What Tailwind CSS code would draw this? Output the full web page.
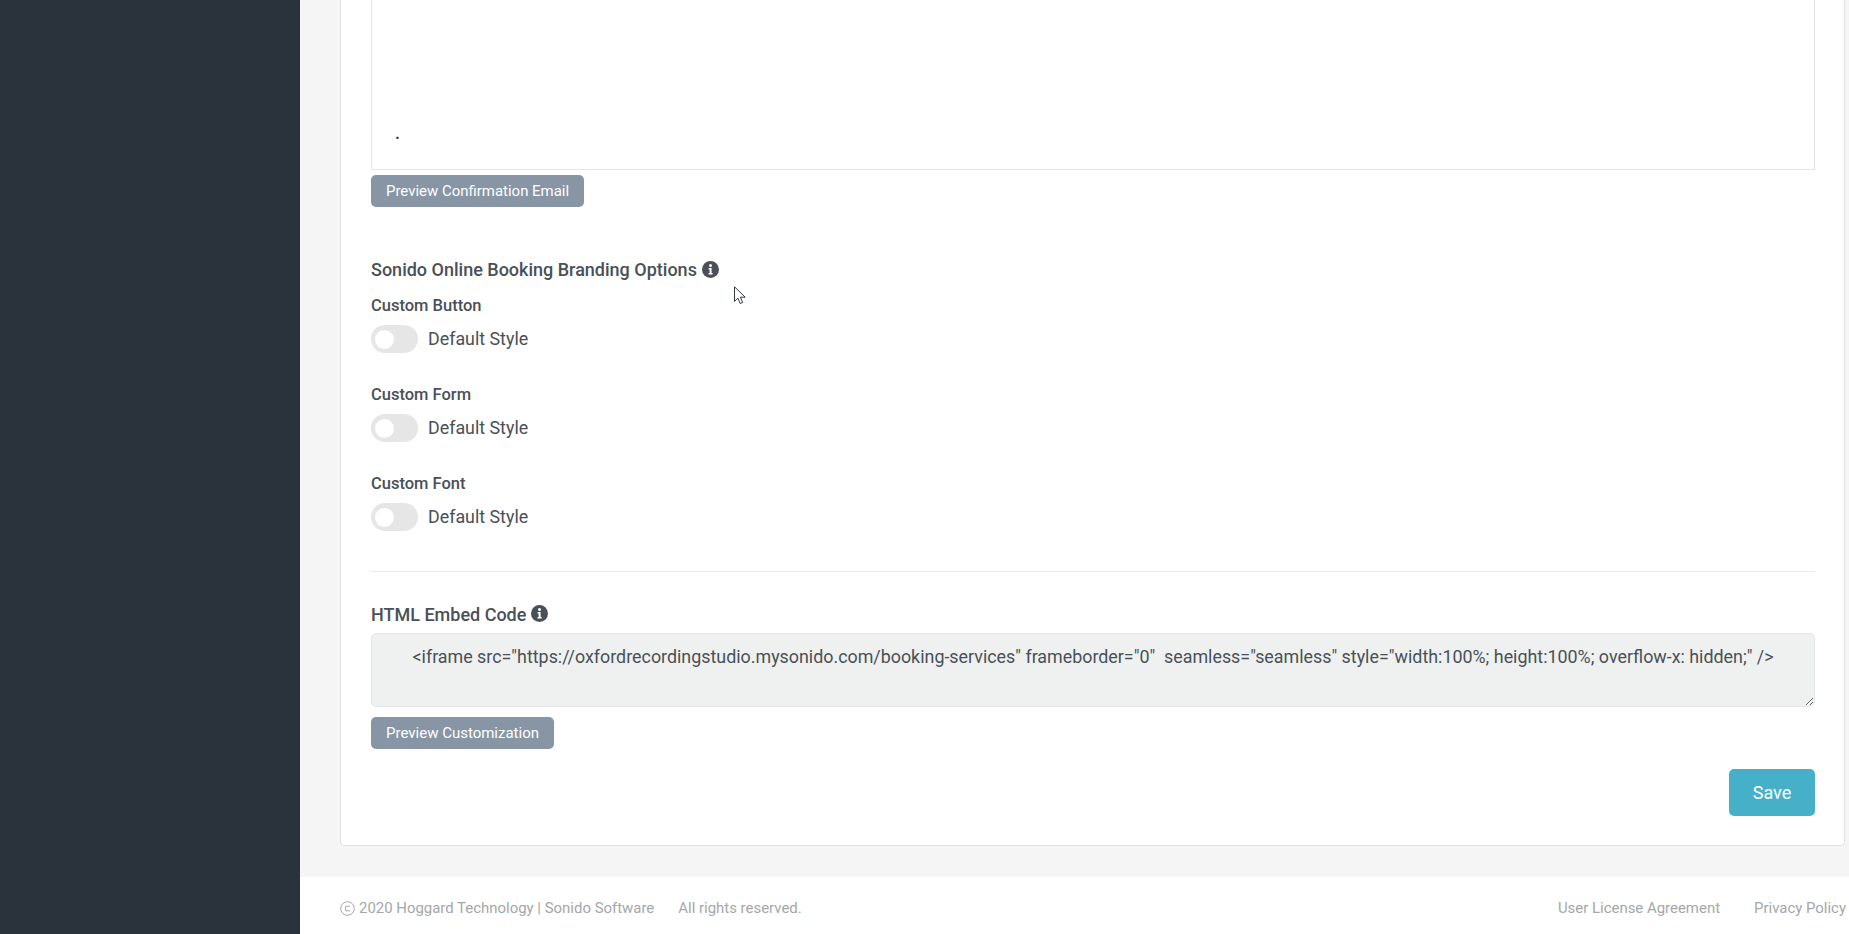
<!DOCTYPE html>
<html lang="en">
<head>
    <meta charset="UTF-8">
    <title>Sonido Online Booking</title>
    <script src="https://cdn.jsdelivr.net/npm/@tailwindcss/browser@4"></script>
</head>
<body class="h-[934px] overflow-hidden flex font-['Roboto',sans-serif] text-[#495057] bg-white">
    <aside class="w-[300px] shrink-0 bg-[#2a323c]"></aside>

    <main class="flex-1 flex flex-col min-w-0">
        <div class="flex-1 bg-[#f5f5f5] pl-10 pr-1">
            <section class="relative h-[846px] bg-white border-x border-b border-[#dfe1e3] rounded-b-[5px] pl-[30px] pr-[29px]">
                <div class="h-[170px] border-x border-b border-[#e4e6e8] flex items-end pl-[23px] pb-[28px]">
                    <span class="text-lg font-medium leading-4 text-[#343a40]">.</span>
                </div>
                <button class="mt-[5px] block h-8 px-[15px] rounded-[5px] bg-[#8795a5] text-white text-[14.96px]">Preview Confirmation Email</button>

                <h3 class="mt-[51px] h-6 flex items-center gap-[5px] text-lg font-medium">
                    Sonido Online Booking Branding Options
                    <svg class="w-[17px] h-[17px] -translate-y-px" viewBox="0 0 17 17"><circle cx="8.5" cy="8.5" r="8.5" fill="#495057"/><circle cx="8.5" cy="4.6" r="1.5" fill="#fff"/><path d="M6.6 7h3v5h1v1.5H6.6V12h1V8.5h-1z" fill="#fff"/></svg>
                </h3>

                <div class="mt-[13px] flex flex-col gap-[31px]">
                    <div>
                        <label class="block h-5 leading-5 pt-px text-[16.5px] font-medium">Custom Button</label>
                        <div class="mt-[10px] flex items-center gap-[10px] h-7">
                            <span class="w-[47px] h-7 rounded-full bg-[#e6e6e6] flex items-center pl-1"><span class="w-[19px] h-[19px] rounded-full bg-white"></span></span>
                            <span class="pt-px text-[17.85px]">Default Style</span>
                        </div>
                    </div>
                    <div>
                        <label class="block h-5 leading-5 pt-px text-[16.5px] font-medium">Custom Form</label>
                        <div class="mt-[10px] flex items-center gap-[10px] h-7">
                            <span class="w-[47px] h-7 rounded-full bg-[#e6e6e6] flex items-center pl-1"><span class="w-[19px] h-[19px] rounded-full bg-white"></span></span>
                            <span class="pt-px text-[17.85px]">Default Style</span>
                        </div>
                    </div>
                    <div>
                        <label class="block h-5 leading-5 pt-px text-[16.5px] font-medium">Custom Font</label>
                        <div class="mt-[10px] flex items-center gap-[10px] h-7">
                            <span class="w-[47px] h-7 rounded-full bg-[#e6e6e6] flex items-center pl-1"><span class="w-[19px] h-[19px] rounded-full bg-white"></span></span>
                            <span class="pt-px text-[17.85px]">Default Style</span>
                        </div>
                    </div>
                </div>

                <hr class="mt-10 border-[#e9ebec]">

                <h3 class="mt-[30px] h-6 flex items-center gap-[5px] pt-px text-lg font-medium">
                    HTML Embed Code
                    <svg class="w-[17px] h-[17px] -translate-y-px" viewBox="0 0 17 17"><circle cx="8.5" cy="8.5" r="8.5" fill="#495057"/><circle cx="8.5" cy="4.6" r="1.5" fill="#fff"/><path d="M6.6 7h3v5h1v1.5H6.6V12h1V8.5h-1z" fill="#fff"/></svg>
                </h3>
                <textarea readonly class="mt-[7px] block w-full h-[74px] rounded-[5px] border border-[#e4e6e8] bg-[#eff1f1] pl-[40.5px] pr-3 pt-[11px] text-[17.87px] leading-6 resize-y outline-none"><iframe src="https://oxfordrecordingstudio.mysonido.com/booking-services" frameborder="0"  seamless="seamless" style="width:100%; height:100%; overflow-x: hidden;" /></textarea>
                <button class="mt-[10px] block h-8 px-[15px] rounded-[5px] bg-[#8795a5] text-white text-[15px]">Preview Customization</button>

                <div class="mt-5 flex justify-end">
                    <button class="w-[86px] h-[47px] rounded-[5px] bg-[#47b0c9] text-white text-lg">Save</button>
                </div>

                <svg class="absolute left-[393px] top-[286px] w-3 h-[19px]" viewBox="0 0 12 19"><path d="M.5.8v14.6l3.4-3.3 2.3 5.4 2.5-1-2.3-5.3h4.8z" fill="#fff" stroke="#343a40"/></svg>
            </section>
        </div>

        <footer class="h-[57px] shrink-0 bg-white pl-10 pr-[3px] pt-[6px] flex items-center justify-between text-[14.95px] text-[#a5a7a9]">
            <div class="flex items-center">
                <span class="flex items-center gap-1">
                    <svg class="w-[15px] h-[15px]" viewBox="0 0 15 15" fill="none" stroke="#a5a7a9"><circle cx="7.5" cy="7.5" r="6.8"/><path d="M10 5.2H5.6v4.6H10"/></svg>
                    2020 Hoggard Technology | Sonido Software
                </span>
                <span class="ml-6">All rights reserved.</span>
            </div>
            <div class="flex gap-[34px]">
                <a>User License Agreement</a>
                <a>Privacy Policy</a>
            </div>
        </footer>
    </main>
</body>
</html>
